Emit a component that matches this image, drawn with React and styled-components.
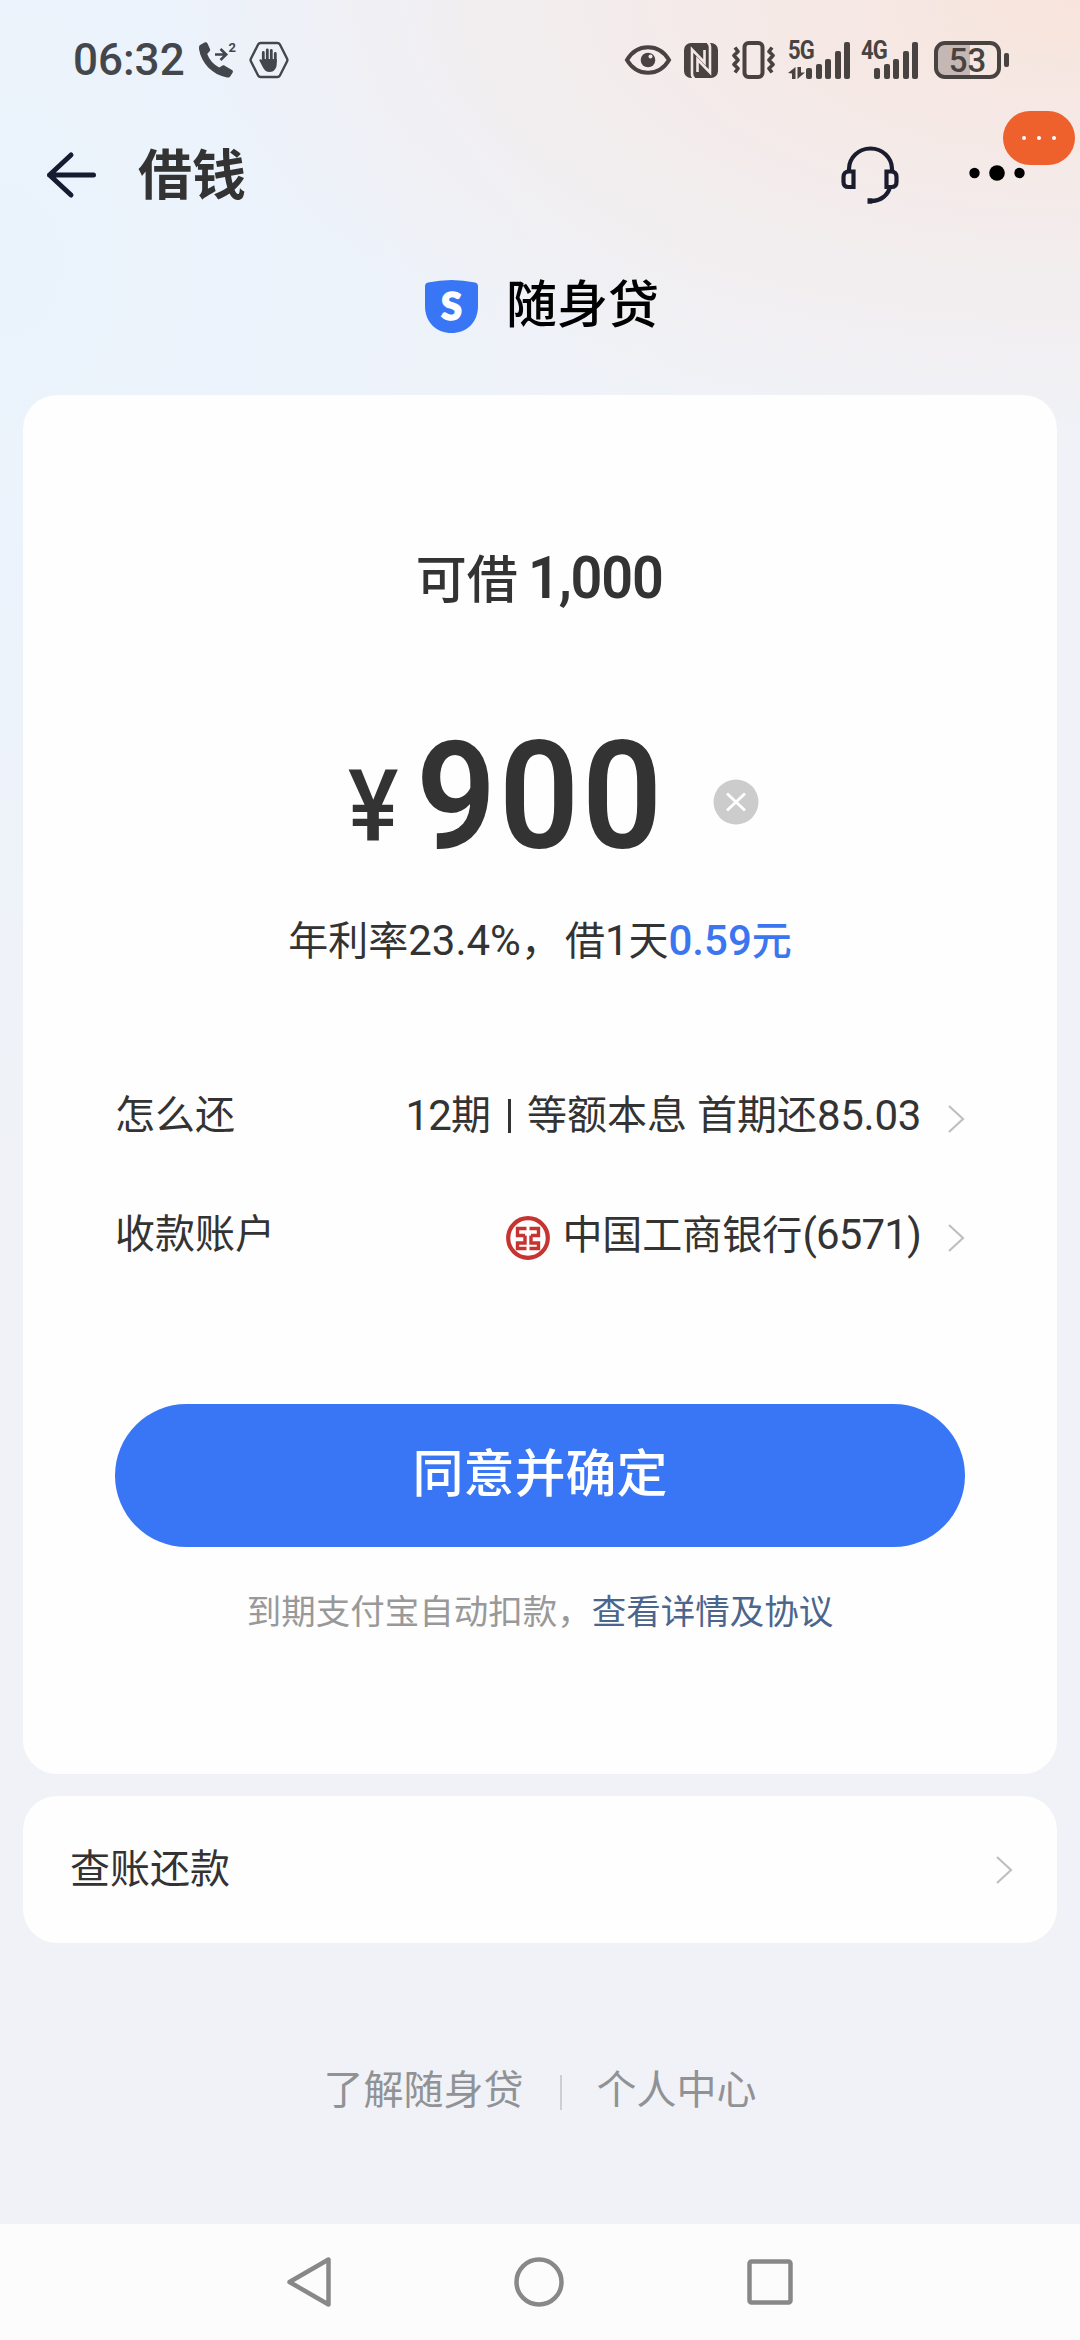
import styled, { createGlobalStyle } from "styled-components";

const GlobalStyle = createGlobalStyle`
  * {
    box-sizing: border-box;
  }

  body {
    margin: 0;
    font-family: Roboto, "Noto Sans CJK SC", sans-serif;
    color: #333;
    background: #f0f2f7;
  }
`;

const StyledPage = styled.div`
  width: 1080px;
  height: 2340px;
  display: flex;
  flex-direction: column;
  overflow: hidden;
  background:
    radial-gradient(ellipse 900px 440px at 1080px 0, #f8e4dc 0%, rgba(245, 233, 230, 0.7) 50%, rgba(240, 242, 247, 0) 100%),
    radial-gradient(ellipse 700px 900px at 0 260px, #eaf3fc 0%, rgba(235, 243, 252, 0.75) 45%, rgba(240, 242, 247, 0) 100%),
    #f0f2f7;
`;

const Icon = styled.svg`
  display: block;
  flex: none;
  width: ${(p) => p.$w}px;
  height: ${(p) => p.$h}px;
  margin-left: ${(p) => p.$left || 0}px;
  margin-top: ${(p) => p.$drop || 0}px;
  overflow: visible;
`;

const StatusBar = styled.div`
  height: 120px;
  padding: 0 79px 0 73px;
  display: flex;
  align-items: center;
`;

const StatusGroup = styled.div`
  display: flex;
  align-items: center;
  color: ${(p) => p.$color};

  & + & {
    margin-left: auto;
  }
`;

const Clock = styled.span`
  width: 126px;
  font-size: 44px;
  font-weight: 500;
  line-height: 50px;
  white-space: nowrap;
`;

const Signal = styled.div`
  position: relative;
  width: ${(p) => p.$w}px;
  height: 38px;
  margin-left: ${(p) => p.$left}px;
  display: flex;
  justify-content: flex-end;
  align-items: flex-end;
  gap: 3.4px;
`;

const Bar = styled.i`
  width: 6px;
  height: ${(p) => p.$h}px;
  border-radius: 2px;
  background: currentColor;
`;

const Generation = styled.span`
  position: absolute;
  left: 0;
  top: -1px;
  font-size: 25px;
  font-weight: 700;
  line-height: 22px;
  letter-spacing: -1px;
  transform: scaleX(0.88);
  transform-origin: left;
`;

const DataArrows = styled(Icon)`
  position: absolute;
  left: 0;
  bottom: 0;
`;

const Battery = styled.div`
  position: relative;
  width: 67px;
  height: 38px;
  margin-left: 16px;
  border: 4px solid currentColor;
  border-radius: 11px;
  background: linear-gradient(90deg, #c5b8b4 55%, transparent 55%);
  font-size: 33px;
  font-weight: 500;
  line-height: 31px;
  text-align: center;

  &::after {
    content: "";
    position: absolute;
    right: -12px;
    top: 8px;
    width: 5px;
    height: 14px;
    border-radius: 2px;
    background: currentColor;
  }
`;

const Header = styled.header`
  height: 109px;
  padding: 0 55px 0 46px;
  display: flex;
  align-items: center;
`;

const Title = styled.h1`
  margin: 0 auto 0 42px;
  padding-top: 4px;
  font-size: 54px;
  font-weight: 700;
  line-height: 80px;
`;

const More = styled.div`
  position: relative;
  width: 56px;
  height: 16px;
  margin: -3px 0 0 70px;
`;

const Bubble = styled.div`
  position: absolute;
  left: 34px;
  top: -54px;
  width: 72px;
  height: 54px;
  border-radius: 27px;
  background: #ee602c;
  display: flex;
  justify-content: center;
  align-items: center;
  gap: 11px;

  & i {
    width: 4px;
    height: 4px;
    border-radius: 50%;
    background: #fff;
  }
`;

const Brand = styled.div`
  height: 166px;
  padding: 40px 0 0 425px;
  display: flex;
  align-items: flex-start;
  color: #000;
  font-size: 51px;
  font-weight: 500;
  line-height: 74px;
`;

const Shield = styled.div`
  position: relative;
  margin: 11px 28px 0 0;
`;

const ShieldLetter = styled.span`
  position: absolute;
  inset: 0;
  color: #fff;
  font-family: Lato, sans-serif;
  font-size: 38px;
  font-weight: 900;
  line-height: 50px;
  text-align: center;
  -webkit-text-stroke: 1.5px #fff;
`;

const LoanCard = styled.section`
  height: 1379px;
  margin: 0 23px;
  padding: 0 92px;
  border-radius: 34px;
  background: #fefefe;
  display: flex;
  flex-direction: column;
  align-items: stretch;
`;

const Quota = styled.div`
  height: 90px;
  margin-top: 138px;
  display: flex;
  justify-content: center;
  align-items: baseline;
  font-size: 51px;
  font-weight: 500;
  line-height: 90px;

  & b {
    margin: 0 -8px 0 10px;
    font-size: 60px;
    font-weight: 600;
    letter-spacing: -1.3px;
    transform: scaleX(0.93);
    transform-origin: left;
  }
`;

const Amount = styled.div`
  height: 180px;
  margin-top: 85px;
  padding-left: 233px;
  display: flex;
  align-items: flex-start;
  font-weight: 600;
  white-space: nowrap;
`;

const Currency = styled.span`
  width: 68px;
  font-size: 101px;
  font-weight: 500;
  line-height: 197px;
  transform: scaleX(0.94);
  transform-origin: left;
`;

const Digits = styled.span`
  width: 297px;
  font-size: 151px;
  line-height: 177px;
  letter-spacing: 3px;
  transform: scaleX(0.93);
  transform-origin: left;
`;

const Clear = styled(Icon)`
  margin-top: 71px;
`;

const Rate = styled.p`
  height: 60px;
  margin: 23px 0 0;
  text-align: center;
  font-size: 40px;
  line-height: 60px;
  white-space: nowrap;

  & strong {
    color: #3b76f0;
    font-weight: 500;
  }
`;

const Comma = styled.span`
  margin-right: 4px;
`;

const Num = styled.span`
  font-size: 42px;
  letter-spacing: ${(p) => p.$spacing || 0}px;
`;

const Field = styled.div`
  height: 60px;
  margin-top: ${(p) => p.$top}px;
  display: flex;
  align-items: center;
  font-size: 40px;
  line-height: 60px;
  white-space: nowrap;
`;

const FieldValue = styled.div`
  margin-left: auto;
  margin-right: 27px;
  display: flex;
  align-items: center;
`;

const Separator = styled.i`
  width: 3px;
  height: 34px;
  margin: 0 16px 0 17px;
  background: #333;
`;

const BankName = styled.span`
  margin-left: 12px;
`;

const Confirm = styled.button`
  height: 143px;
  margin: 139px 0 0;
  padding: 0 0 11px;
  border: 0;
  border-radius: 72px;
  background: #3976f6;
  color: #fff;
  font-family: inherit;
  font-size: 51px;
  font-weight: 500;
`;

const Terms = styled.p`
  margin: 40px 0 0;
  text-align: center;
  color: #999;
  font-size: 34.5px;
  line-height: 50px;

  & a {
    color: #4c658c;
  }
`;

const BillCard = styled.section`
  height: 147px;
  margin: 22px 23px 0;
  padding: 0 44px 0 47px;
  border-radius: 34px;
  background: #fefefe;
  display: flex;
  justify-content: space-between;
  align-items: center;
  font-size: 40px;
`;

const BillLabel = styled.span`
  padding-bottom: 7px;
`;

const Links = styled.footer`
  height: 281px;
  padding-top: 118px;
  display: flex;
  justify-content: center;
  color: #909296;
  font-size: 40px;
  line-height: 60px;

  & span + span {
    position: relative;
    margin-left: 36px;
    padding-left: 37px;
  }

  & span + span::before {
    content: "";
    position: absolute;
    left: 0;
    top: 14px;
    width: 2px;
    height: 35px;
    background: #ccced2;
  }
`;

const NavBar = styled.nav`
  height: 116px;
  padding: 0 287px;
  background: #fcfcfc;
  display: flex;
  justify-content: space-between;
  align-items: center;
`;

const Chevron = ({ drop }) => (
  <Icon $w={17} $h={28} $drop={drop} viewBox="0 0 17 28" fill="none" stroke="#bfbfbf" strokeWidth="2.2">
    <path d="M1 1l14 13L1 27" />
  </Icon>
);

const BARS = [11, 15, 20, 28, 37];

const SignalBars = ({ label, width, left, arrows }) => (
  <Signal $w={width} $left={left}>
    <Generation>{label}</Generation>
    {arrows && (
      <DataArrows $w={17} $h={12} viewBox="0 0 17 12" fill="currentColor">
        <path d="M0 6L7.500 0v12H4V6.500zM9.500 0H13v5.500h4L9.500 12z" />
      </DataArrows>
    )}
    {BARS.map((h) => (
      <Bar key={h} $h={h} />
    ))}
  </Signal>
);

const Status = () => (
  <StatusBar>
    <StatusGroup $color="#43474b">
      <Clock>06:32</Clock>
      <Icon $w={36} $h={36} viewBox="0 0 36 36" fill="currentColor">
        <path d="M1 3l5-2.7c1-.4 2 0 2.400 1l2.600 5.700c.4 1 .1 1.800-.6 2.500L8.200 12c2.300 6 6.500 10.500 12 13.500l3-1.800c.8-.5 1.700-.5 2.500 0l7.300 4.300c1 .6 1.200 1.600.7 2.600L31.500 34c-.7 1.200-2 1.800-3.500 1.500C13.500 32.500 2.500 22 0 7 0 5 0 3.800 1 3z" />
        <path d="M16 12.500h11M21.500 7l5.700 5.500-5.700 5.500" fill="none" stroke="currentColor" strokeWidth="2.600" />
        <text x="29.500" y="10" fontSize="13" fontWeight="700">2</text>
      </Icon>
      <Icon $w={40} $h={36} $left={14} viewBox="0 0 40 36" fill="currentColor">
        <path d="M11.500 1h17q1.500 0 2.300 1.300L38 16.500q.8 1.500 0 3L30.800 33.700Q30 35 28.500 35h-17q-1.500 0-2.300-1.300L2 19.500q-.8-1.500 0-3L9.200 2.300Q10 1 11.500 1z" fill="none" stroke="currentColor" strokeWidth="2.400" />
        <path d="M14.300 20V10.500M18.300 18V8M22.300 18V8.500M26.300 20v-8.500" stroke="currentColor" strokeWidth="2.800" strokeLinecap="round" />
        <path d="M13 17h14.700v5c0 4.500-3 8-7 8-3.500 0-5.500-2-7-5l-3.200-6.200c-.6-1.500 1.200-2.300 2.500-.8z" />
      </Icon>
    </StatusGroup>
    <StatusGroup $color="#484240">
      <Icon $w={46} $h={30} viewBox="0 0 46 30" fill="none" stroke="currentColor">
        <path d="M2 15C12-2 34-2 44 15 34 32 12 32 2 15z" strokeWidth="4" />
        <circle cx="23" cy="15" r="7.300" fill="currentColor" stroke="none" />
        <circle cx="25.500" cy="11.500" r="2" fill="#f2e8e6" stroke="none" />
      </Icon>
      <Icon $w={34} $h={35} $left={13} viewBox="0 0 34 35">
        <rect width="34" height="35" rx="7" fill="currentColor" />
        <g fill="none" stroke="#f3e8e5" strokeWidth="2.600">
          <path d="M10.500 35.500Q8 34 8 31V6.500L20.500 19.500V7" />
          <path d="M23.500-.5Q26 1 26 4v25.500L13.500 16.500V29" />
        </g>
      </Icon>
      <Icon $w={43} $h={38} $left={14} viewBox="0 0 43 38" fill="none" stroke="currentColor">
        <rect x="12.500" y="2" width="18" height="34" rx="4" strokeWidth="4" />
        <path d="M3 6.500l3 4-4 4 4 4.500-4 4.500 4 4-3 4M40 6.500l-3 4 4 4-4 4.500 4 4.500-4 4 3 4" strokeWidth="3.600" strokeLinejoin="round" />
      </Icon>
      <SignalBars label="5G" width={62} left={13} arrows />
      <SignalBars label="4G" width={57} left={11} />
      <Battery>53</Battery>
    </StatusGroup>
  </StatusBar>
);

const BankLogo = () => (
  <Icon $w={44} $h={44} $drop={6} viewBox="0 0 44 44" fill="none" stroke="#c63431">
    <circle cx="22" cy="22" r="19.800" strokeWidth="4.200" />
    <path d="M20.500 12.500h-9v7h7.500M20.500 32.500h-9v-5.500h7.500v-7.500M23.500 12.500h9v7H25M23.500 32.500h9v-5.500H25v-7.500" strokeWidth="3.400" />
  </Icon>
);

const App = () => {
  return (
    <>
      <GlobalStyle />
      <StyledPage>
        <Status />

        <Header>
          <Icon $w={50} $h={46} viewBox="0 0 50 46" fill="none" stroke="#151b30" strokeWidth="5" strokeLinecap="round" strokeLinejoin="round">
            <path d="M47.500 23h-44M25 3L3.500 23 25 43" />
          </Icon>
          <Title>借钱</Title>
          <Icon $w={58} $h={58} viewBox="0 0 58 58" fill="none" stroke="#1b1d2f" strokeWidth="4.200">
            <path d="M8 25v-2a21.500 20.500 0 0 1 43 0v2M49 41c-2 8-9 14-19 14" />
            <path d="M12.500 25.500H8q-5.500 0-5.500 5.500v5q0 5 5 5h5zM45.500 25.500H50q5.500 0 5.500 5.500v5q0 5-5 5h-5z" />
            <path d="M26.500 55h5" strokeWidth="5.500" />
          </Icon>
          <More>
            <Icon $w={56} $h={16} viewBox="0 0 56 16">
              <circle cx="5.500" cy="8" r="5.200" />
              <circle cx="28" cy="8" r="7.800" />
              <circle cx="50.500" cy="8" r="5.200" />
            </Icon>
            <Bubble>
              <i />
              <i />
              <i />
            </Bubble>
          </More>
        </Header>

        <Brand>
          <Shield>
            <Icon $w={53} $h={53} viewBox="0 0 53 53" fill="#3976f6">
              <path d="M3 2.500q23.500-5 47 0 3 .7 3 4V26C53 43 41 53 26.500 53S0 43 0 26V6.500q0-3.300 3-4z" />
            </Icon>
            <ShieldLetter>S</ShieldLetter>
          </Shield>
          随身贷
        </Brand>

        <LoanCard>
          <Quota>
            可借<b>1,000</b>
          </Quota>
          <Amount>
            <Currency>¥</Currency>
            <Digits>900</Digits>
            <Clear $w={46} $h={46} viewBox="0 0 46 46">
              <circle cx="23" cy="23" r="22.500" fill="#ccc" />
              <path d="M14 14.500l18 17M32 14.500l-18 17" stroke="#fff" strokeWidth="2.800" />
            </Clear>
          </Amount>
          <Rate>
            年利率<Num>23.4%</Num>
            <Comma>，</Comma>借<Num>1</Num>天
            <strong>
              <Num>0.59</Num>元
            </strong>
          </Rate>

          <Field $top={115}>
            怎么还
            <FieldValue>
              <Num $spacing={-0.8}>12</Num>期<Separator />等额本息&nbsp;首期还<Num $spacing={-0.3}>85.03</Num>
            </FieldValue>
            <Chevron drop={6} />
          </Field>
          <Field $top={59}>
            收款账户
            <FieldValue>
              <BankLogo />
              <BankName>
                中国工商银行<Num $spacing={-0.8}>(6571)</Num>
              </BankName>
            </FieldValue>
            <Chevron drop={6} />
          </Field>

          <Confirm>同意并确定</Confirm>
          <Terms>
            到期支付宝自动扣款，<a>查看详情及协议</a>
          </Terms>
        </LoanCard>

        <BillCard>
          <BillLabel>查账还款</BillLabel>
          <Chevron />
        </BillCard>

        <Links>
          <span>了解随身贷</span>
          <span>个人中心</span>
        </Links>

        <NavBar>
          <Icon $w={44} $h={50} viewBox="0 0 44 50" fill="none" stroke="#888" strokeWidth="4.500" strokeLinejoin="round">
            <path d="M41.500 2.500v45L2.500 25z" />
          </Icon>
          <Icon $w={50} $h={50} viewBox="0 0 50 50" fill="none" stroke="#888" strokeWidth="4.500">
            <circle cx="25" cy="25" r="22.500" />
          </Icon>
          <Icon $w={46} $h={46} viewBox="0 0 46 46" fill="none" stroke="#888" strokeWidth="4.500">
            <rect x="2.500" y="2.500" width="41" height="41" rx="2" />
          </Icon>
        </NavBar>
      </StyledPage>
    </>
  );
};

export default App;
